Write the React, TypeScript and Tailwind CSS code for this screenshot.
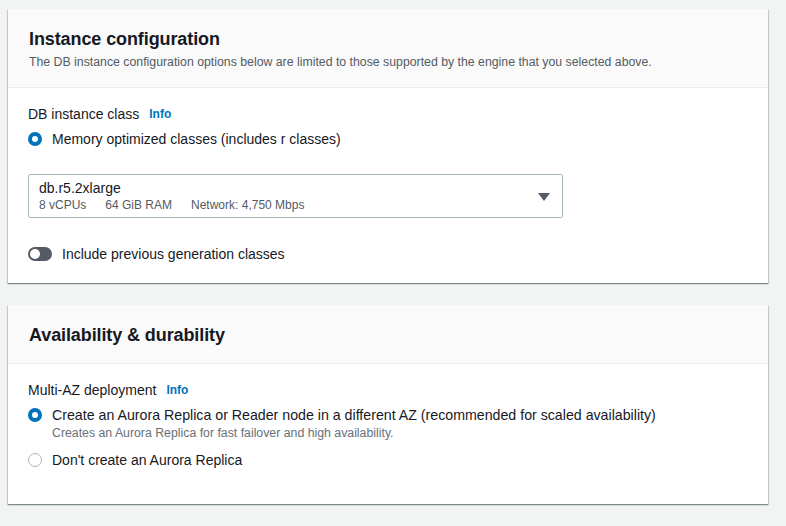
import type { ReactNode } from "react"

const font = { fontFamily: '"Liberation Sans", Arial, sans-serif' }

function Card({ title, description, children, className = "" }: { title?: string; description?: string; children?: ReactNode; className?: string }) {
    return (
        <section className={`shrink-0 bg-white shadow-[0_1px_1px_0_rgba(0,28,36,0.3),1px_1px_1px_0_rgba(0,28,36,0.15),-1px_1px_1px_0_rgba(0,28,36,0.15)] ${className}`}>
            {title && (
                <div className="bg-[#fafafa] border-b border-[#eaeded] px-[21px] pt-[19px] pb-[17px]">
                    <h2 className="text-[18px] leading-[22px] font-bold text-[#16191f] tracking-[-0.1px]">{title}</h2>
                    {description && (
                        <p className="mt-[4px] text-[12.3px] leading-4 text-[#545b64]">{description}</p>
                    )}
                </div>
            )}
            {children}
        </section>
    )
}

function Radio({ checked }: { checked?: boolean }) {
    return checked ? (
        <span className="w-[14px] h-[14px] rounded-full border-[4px] border-[#0073bb] bg-white shrink-0" />
    ) : (
        <span className="w-[14px] h-[14px] rounded-full border-[1.5px] border-[#aab7b8] bg-white shrink-0" />
    )
}

function FieldLabel({ text }: { text: string }) {
    return (
        <div className="flex items-center gap-[10px] text-[14px] leading-5 text-[#16191f]">
            <span>{text}</span>
            <span className="text-[12px] font-bold text-[#0073bb]">Info</span>
        </div>
    )
}

export default function App() {
    return (
        <div className="h-[526px] overflow-hidden bg-[#f2f3f3] pl-[8px] pr-[18px] pt-[9px] flex flex-col gap-[22px]" style={font}>
            <Card
                title="Instance configuration"
                description="The DB instance configuration options below are limited to those supported by the engine that you selected above."
                className="h-[274px]"
            >
                <div className="px-[20px] pt-[16px]">
                    <FieldLabel text="DB instance class" />
                    <label className="mt-[5px] flex items-center gap-[10px] text-[14px] leading-5 text-[#16191f]">
                        <Radio checked />
                        <span>Memory optimized classes (includes r classes)</span>
                    </label>
                    <div className="mt-[25px] w-[535px] h-[44px] border border-[#aab7b8] rounded-[2px] pl-[10px] pr-[12px] flex items-center justify-between">
                        <div>
                            <div className="text-[14px] leading-[18px] text-[#16191f]">db.r5.2xlarge</div>
                            <div className="text-[12px] leading-4 text-[#545b64] flex gap-[19px]">
                                <span>8 vCPUs</span>
                                <span>64 GiB RAM</span>
                                <span>Network: 4,750 Mbps</span>
                            </div>
                        </div>
                        <svg width="12" height="9" viewBox="0 0 12 9" className="mt-[2px]">
                            <path d="M0 0h12L6 8z" fill="#545b64" />
                        </svg>
                    </div>
                    <div className="mt-[26px] flex items-center gap-[10px] text-[14px] leading-5 text-[#16191f]">
                        <span className="w-[24px] h-[14px] rounded-full bg-[#545b64] flex items-center pl-[2px] shrink-0">
                            <span className="w-[10px] h-[10px] rounded-full bg-white" />
                        </span>
                        <span>Include previous generation classes</span>
                    </div>
                </div>
            </Card>

            <Card title="Availability & durability" className="h-[199px]">
                <div className="px-[20px] pt-[16px]">
                    <FieldLabel text="Multi-AZ deployment" />
                    <div className="mt-[5px] flex items-start gap-[10px]">
                        <span className="mt-[3px] flex"><Radio checked /></span>
                        <div>
                            <div className="text-[14.2px] leading-5 text-[#16191f]">
                                Create an Aurora Replica or Reader node in a different AZ (recommended for scaled availability)
                            </div>
                            <div className="text-[12.3px] leading-4 text-[#687078]">
                                Creates an Aurora Replica for fast failover and high availability.
                            </div>
                        </div>
                    </div>
                    <div className="mt-[9px] flex items-center gap-[10px] text-[14px] leading-5 text-[#16191f]">
                        <Radio />
                        <span>Don't create an Aurora Replica</span>
                    </div>
                </div>
            </Card>

            <Card className="h-[200px]" />
        </div>
    )
}
